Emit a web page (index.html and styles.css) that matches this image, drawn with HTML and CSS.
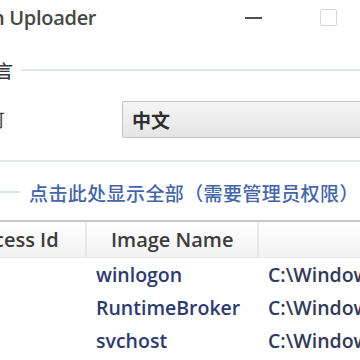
FILE: index.html
```html
<!DOCTYPE html>
<html>
<head>
<meta charset="utf-8">
<link rel="stylesheet" href="styles.css">
</head>
<body>
<div class="win">
  <div class="titlebar">
    <span class="title">n Uploader</span>
    <span class="ctl min"></span>
    <span class="ctl max"></span>
  </div>
  <div class="group-head">
    <span class="legend">言</span>
    <span class="rule"></span>
  </div>
  <div class="field">
    <span class="label">可</span>
    <div class="combo">中文</div>
  </div>
  <div class="group-bottom"></div>
  <div class="linkrow">
    <span class="stub"></span>
    <a class="link">点击此处显示全部（需要管理员权限）</a>
  </div>
  <div class="table">
    <div class="thead">
      <div class="th c1">cess Id</div>
      <div class="th c2">Image Name</div>
      <div class="th c3"></div>
    </div>
    <div class="tr"><div class="td c1"></div><div class="td c2">winlogon</div><div class="td c3">C:\Windows\System32</div></div>
    <div class="tr"><div class="td c1"></div><div class="td c2">RuntimeBroker</div><div class="td c3">C:\Windows\System32</div></div>
    <div class="tr"><div class="td c1"></div><div class="td c2">svchost</div><div class="td c3">C:\Windows\System32</div></div>
  </div>
</div>
</body>
</html>
```
FILE: styles.css
```css
html, body {
  margin: 0;
  padding: 0;
  background: #fff;
}
body {
  width: 360px;
  height: 360px;
  overflow: hidden;
  font-family: "Open Sans", "Noto Sans CJK SC", sans-serif;
}
.win {
  width: 360px;
  overflow: hidden;
}
.titlebar {
  height: 35px;
  display: flex;
  align-items: center;
}
.title {
  flex: none;
  width: 249px;
  margin-left: -8px;
  font-size: 20px;
  color: #474747;
  font-weight: 600;
  letter-spacing: -0.3px;
  white-space: nowrap;
}
.ctl {
  display: block;
  flex: none;
}
.min {
  width: 17px;
  height: 2px;
  background: #505050;
  margin-left: 4px;
}
.max {
  width: 15px;
  height: 15px;
  border: 1px solid #d6d6d6;
  border-radius: 2px;
  margin-left: 58px;
}
.group-head {
  margin-top: 21px;
  height: 28px;
  display: flex;
  align-items: center;
}
.legend {
  margin-left: -5px;
  font-family: "Noto Sans CJK SC", sans-serif;
  font-size: 18px;
  color: #3a3a3a;
  font-weight: 500;
  line-height: 20px;
}
.rule {
  flex: 1;
  height: 2px;
  background: #dfe7ec;
  margin-left: 8px;
}
.field {
  margin-top: 15px;
  height: 40px;
  display: flex;
  align-items: center;
}
.label {
  margin-left: -13px;
  font-family: "Noto Sans CJK SC", sans-serif;
  font-size: 18px;
  color: #3a3a3a;
  width: 18px;
}
.combo {
  margin-left: 117px;
  flex: 1;
  height: 37px;
  margin-right: -20px;
  border: 1px solid #c3c3c3;
  border-radius: 2px;
  background: linear-gradient(#f5f5f5, #e5e5e5);
  box-sizing: border-box;
  display: flex;
  align-items: center;
  padding-left: 9px;
  font-family: "Noto Sans CJK SC", sans-serif;
  font-size: 19px;
  font-weight: 600;
  color: #2e2e2e;
}
.group-bottom {
  margin-top: 21px;
  height: 2px;
  background: #e2e8ee;
}
.linkrow {
  margin-top: 16px;
  height: 28px;
  display: flex;
  align-items: center;
}
.stub {
  width: 20px;
  height: 2px;
  background: #dde4ea;
}
.link {
  margin-left: 9px;
  font-family: "Noto Sans CJK SC", sans-serif;
  font-size: 19px;
  font-weight: 500;
  letter-spacing: 0.4px;
  color: #4466a6;
  white-space: nowrap;
}
.table {
  margin-top: 14px;
  border-top: 2px solid #c8c8c8;
}
.thead {
  display: flex;
  height: 35px;
  background: linear-gradient(#ffffff, #f2f2f2);
  border-bottom: 1px solid #e6e6e6;
}
.th {
  box-sizing: border-box;
  display: flex;
  align-items: center;
  font-size: 20px;
  font-weight: 600;
  color: #3c3c3c;
  white-space: nowrap;
  border-right: 2px solid #e8e8e8;
}
.c1 { width: 87px; flex: none; }
.c2 { width: 172px; flex: none; }
.c3 { flex: 1; border-right: none; }
.th.c1 { margin-left: -6px; width: 93px; }
.th.c2 { padding-left: 24px; }
.tr {
  display: flex;
  height: 33px;
  align-items: center;
}
.td {
  font-size: 19.5px;
  font-weight: 600;
  color: #2d3a6e;
  white-space: nowrap;
  overflow: hidden;
}
.td.c2 { padding-left: 9px; box-sizing: border-box; }
.td.c3 { padding-left: 9px; color: #333a58; }
```
